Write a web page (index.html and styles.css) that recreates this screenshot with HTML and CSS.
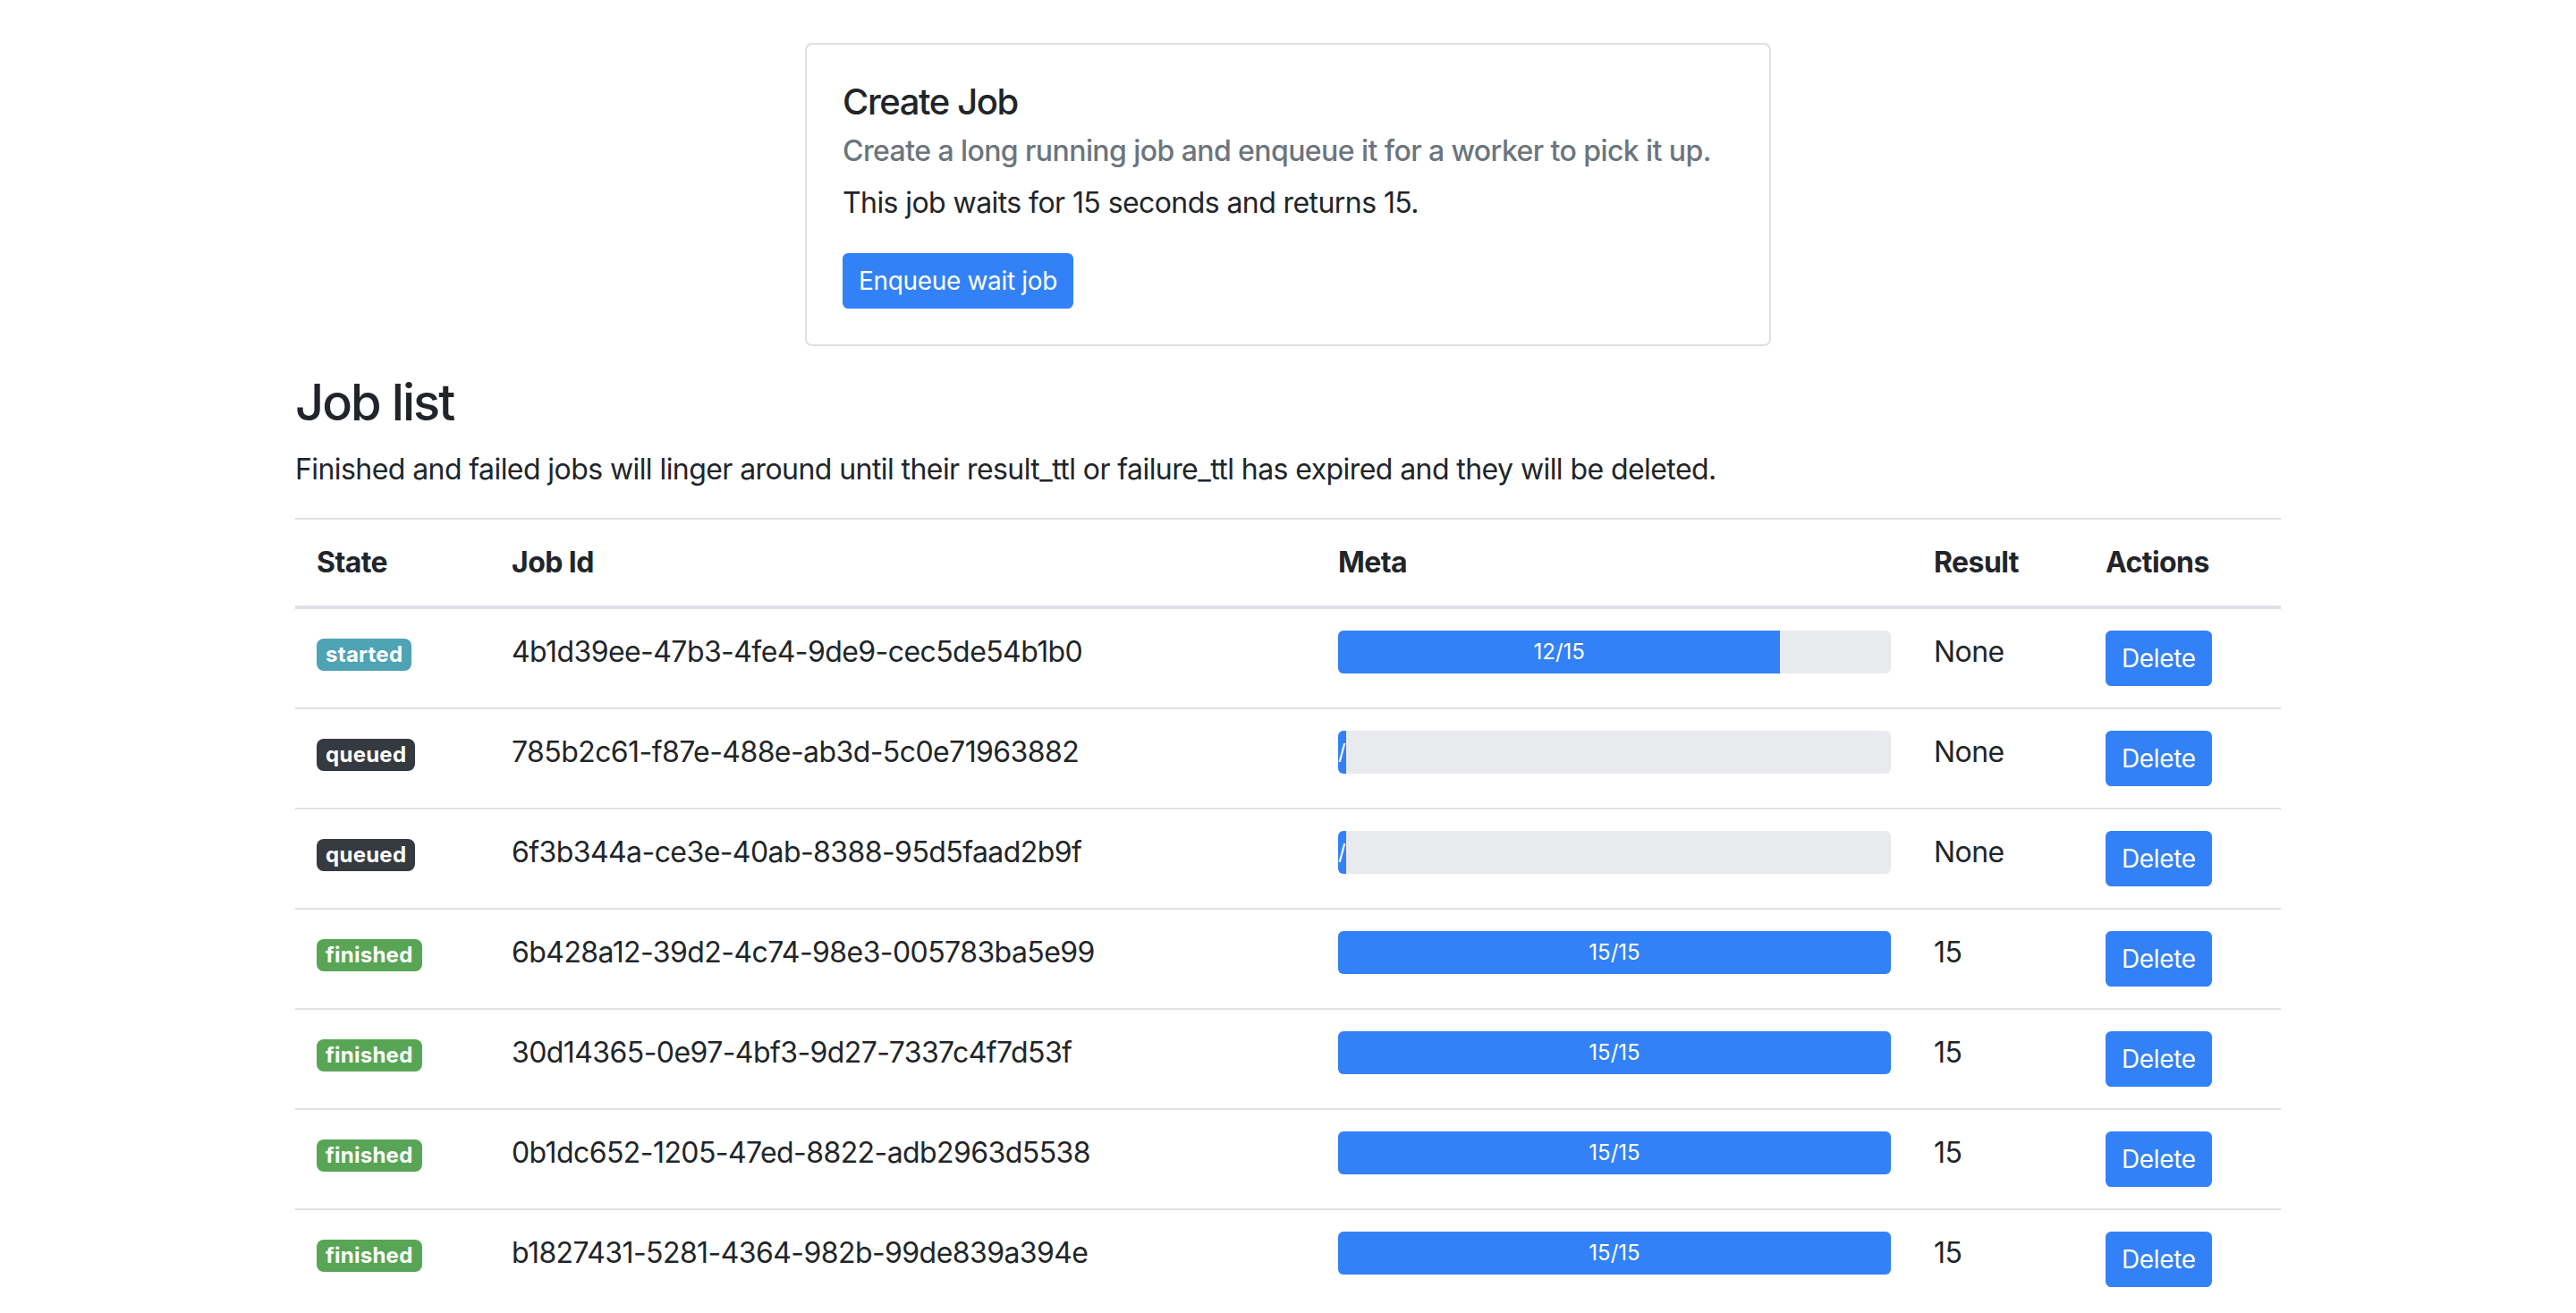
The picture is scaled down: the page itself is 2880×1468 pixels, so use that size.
FILE: index.html
```html
<!DOCTYPE html>
<html lang="en">
<head>
<meta charset="utf-8">
<title>Jobs</title>
<link rel="stylesheet" href="styles.css">
</head>
<body>
<div class="container">
  <div class="card-row">
    <div class="card">
      <div class="card-body">
        <h5 class="card-title">Create Job</h5>
        <h6 class="card-subtitle">Create a long running job and enqueue it for a worker to pick it up.</h6>
        <p class="card-text">This job waits for 15 seconds and returns 15.</p>
        <button class="btn btn-primary btn-sm" type="button">Enqueue wait job</button>
      </div>
    </div>
  </div>

  <h3 class="section-title">Job list</h3>
  <p class="section-lead">Finished and failed jobs will linger around until their result_ttl or failure_ttl has expired and they will be deleted.</p>

  <table class="table">
    <colgroup>
      <col class="col-state">
      <col class="col-id">
      <col class="col-meta">
      <col class="col-result">
      <col class="col-actions">
    </colgroup>
    <thead>
      <tr>
        <th>State</th>
        <th>Job Id</th>
        <th>Meta</th>
        <th>Result</th>
        <th>Actions</th>
      </tr>
    </thead>
    <tbody>
      <tr>
        <td><span class="badge badge-info">started</span></td>
        <td>4b1d39ee-47b3-4fe4-9de9-cec5de54b1b0</td>
        <td><div class="progress"><div class="progress-bar" style="width: 80%">12/15</div></div></td>
        <td>None</td>
        <td><button class="btn btn-primary btn-sm" type="button">Delete</button></td>
      </tr>
      <tr>
        <td><span class="badge badge-dark">queued</span></td>
        <td>785b2c61-f87e-488e-ab3d-5c0e71963882</td>
        <td><div class="progress"><div class="progress-bar">/</div></div></td>
        <td>None</td>
        <td><button class="btn btn-primary btn-sm" type="button">Delete</button></td>
      </tr>
      <tr>
        <td><span class="badge badge-dark">queued</span></td>
        <td>6f3b344a-ce3e-40ab-8388-95d5faad2b9f</td>
        <td><div class="progress"><div class="progress-bar">/</div></div></td>
        <td>None</td>
        <td><button class="btn btn-primary btn-sm" type="button">Delete</button></td>
      </tr>
      <tr>
        <td><span class="badge badge-success">finished</span></td>
        <td>6b428a12-39d2-4c74-98e3-005783ba5e99</td>
        <td><div class="progress"><div class="progress-bar" style="width: 100%">15/15</div></div></td>
        <td>15</td>
        <td><button class="btn btn-primary btn-sm" type="button">Delete</button></td>
      </tr>
      <tr>
        <td><span class="badge badge-success">finished</span></td>
        <td>30d14365-0e97-4bf3-9d27-7337c4f7d53f</td>
        <td><div class="progress"><div class="progress-bar" style="width: 100%">15/15</div></div></td>
        <td>15</td>
        <td><button class="btn btn-primary btn-sm" type="button">Delete</button></td>
      </tr>
      <tr>
        <td><span class="badge badge-success">finished</span></td>
        <td>0b1dc652-1205-47ed-8822-adb2963d5538</td>
        <td><div class="progress"><div class="progress-bar" style="width: 100%">15/15</div></div></td>
        <td>15</td>
        <td><button class="btn btn-primary btn-sm" type="button">Delete</button></td>
      </tr>
      <tr>
        <td><span class="badge badge-success">finished</span></td>
        <td>b1827431-5281-4364-982b-99de839a394e</td>
        <td><div class="progress"><div class="progress-bar" style="width: 100%">15/15</div></div></td>
        <td>15</td>
        <td><button class="btn btn-primary btn-sm" type="button">Delete</button></td>
      </tr>
    </tbody>
  </table>
</div>
</body>
</html>
```

FILE: styles.css
```css
html {
  font-size: 32px;
}

* {
  box-sizing: border-box;
}

body {
  margin: 0;
  font-family: Inter, "Liberation Sans", sans-serif;
  font-size: 1rem;
  line-height: 1.5;
  letter-spacing: -0.018em;
  color: #212529;
  background: #fff;
}

.container {
  max-width: 2280px;
  margin: 0 auto;
  padding: 0 30px;
}

.card-row {
  display: flex;
  justify-content: center;
  margin-top: 48px;
}

.card {
  width: 1080px;
  border: 2px solid rgba(0, 0, 0, 0.125);
  border-radius: 8px;
  background: #fff;
}

.card-body {
  padding: 40px;
}

.card-title {
  margin: 0 0 24px;
  font-size: 40px;
  font-weight: 500;
  line-height: 1.2;
  letter-spacing: -0.035em;
}

.card-subtitle {
  margin: -12px 0 15px;
  font-size: 32px;
  font-weight: 500;
  line-height: 1.2;
  color: #6c757d;
}

.card-text {
  margin: 0 0 32px;
}

.btn {
  display: inline-block;
  font-family: inherit;
  font-weight: 400;
  letter-spacing: -0.012em;
  color: #fff;
  text-align: center;
  border: 2px solid transparent;
  cursor: pointer;
}

.btn-primary {
  background: #3381f6;
  border-color: #3381f6;
}

.btn-sm {
  padding: 8px 16px;
  font-size: 28px;
  line-height: 1.5;
  border-radius: 6.4px;
}

.section-title {
  margin: 30px 0 16px;
  font-size: 56px;
  font-weight: 500;
  line-height: 1.2;
  letter-spacing: -0.035em;
}

.section-lead {
  margin: 0 0 30px;
}

.table {
  width: 100%;
  border-collapse: collapse;
  table-layout: fixed;
  margin-bottom: 32px;
  color: #212529;
}

.col-state { width: 218px; }
.col-id { width: 924px; }
.col-meta { width: 666px; }
.col-result { width: 192px; }
.col-actions { width: 220px; }

.table th,
.table td {
  padding: 24px;
  vertical-align: top;
  border-top: 2px solid #dee2e6;
  text-align: left;
}

.table th {
  font-weight: 700;
}

.table thead th {
  vertical-align: bottom;
  border-bottom: 4px solid #dee2e6;
}

.badge {
  display: inline-block;
  padding: 0.25em 0.42em;
  font-size: 24px;
  font-weight: 700;
  line-height: 1;
  letter-spacing: 0.01em;
  color: #fff;
  text-align: center;
  white-space: nowrap;
  vertical-align: baseline;
  border-radius: 8px;
}

.badge-info { background: #4ea3b5; }
.badge-dark { background: #343a40; }
.badge-success { background: #58a555; }

.progress {
  display: flex;
  height: 48px;
  overflow: hidden;
  font-size: 24px;
  line-height: 0;
  letter-spacing: 0;
  background: #e9eaee;
  border-radius: 6px;
}

.progress-bar {
  display: flex;
  flex-direction: column;
  justify-content: center;
  overflow: hidden;
  color: #fff;
  text-align: center;
  white-space: nowrap;
  background: #3381f6;
  line-height: 1.5;
}
```
